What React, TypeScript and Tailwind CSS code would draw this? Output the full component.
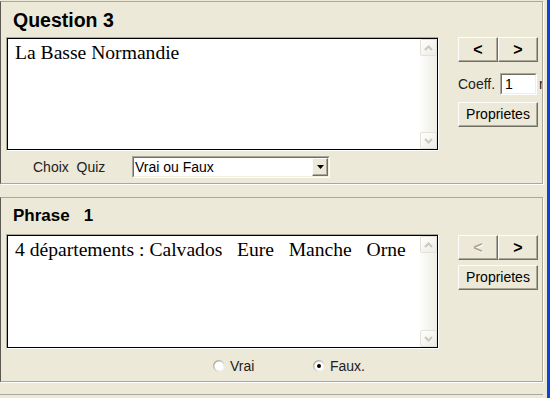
import React from "react";

const ui = "font-['Liberation_Sans',Arial,sans-serif]";

function XpButton({
  children,
  className = "",
  disabled = false,
}: {
  children: React.ReactNode;
  className?: string;
  disabled?: boolean;
}) {
  return (
    <div
      className={`flex items-center justify-center bg-[#ece9d8] border border-t-[#fdfdfb] border-l-[#fdfdfb] border-r-[#716f64] border-b-[#716f64] shadow-[inset_-1px_-1px_0_#aca899] ${
        disabled ? "text-[#aca899] [text-shadow:1px_1px_0_#fff]" : "text-black"
      } ${className}`}
    >
      {children}
    </div>
  );
}

function ScrollArrow({ up }: { up?: boolean }) {
  return (
    <div className="w-[17px] h-[17px] rounded-[2px] border border-[#e4e2d8] bg-gradient-to-br from-white to-[#ecebe3] flex items-center justify-center">
      <svg width="9" height="6" viewBox="0 0 9 6">
        <path
          d={up ? "M1 5 L4.5 1.5 L8 5" : "M1 1 L4.5 4.5 L8 1"}
          fill="none"
          stroke="#cbc8bb"
          strokeWidth="2"
        />
      </svg>
    </div>
  );
}

// sunken white text box with a disabled XP scrollbar
function TextBox({ text, height }: { text: string; height: string }) {
  return (
    <div className={`w-[433px] ${height} border border-t-[#aca899] border-l-[#aca899] border-b-white border-r-white`}>
      <div className="h-full border border-black bg-white flex">
        <div className="flex-1 pl-[7px] pt-[1px] font-['Liberation_Serif','Times_New_Roman',serif] text-[19.6px] leading-[25px] text-black whitespace-pre-wrap">
          {text}
        </div>
        <div className="w-[17px] flex flex-col justify-between bg-gradient-to-r from-[#fdfdfb] to-[#eeede5]">
          <ScrollArrow up />
          <ScrollArrow />
        </div>
      </div>
    </div>
  );
}

function Radio({ checked, label }: { checked?: boolean; label: string }) {
  return (
    <div className="flex items-center">
      <svg width="12" height="12" viewBox="0 0 12 12">
        <defs>
          <linearGradient id={`rg${label}`} x1="0" y1="0" x2="1" y2="1">
            <stop offset="0" stopColor="#9c9a8e" />
            <stop offset="0.55" stopColor="#d8d6cb" />
            <stop offset="1" stopColor="#ffffff" />
          </linearGradient>
        </defs>
        <circle cx="6" cy="6" r="5.3" fill="#fff" stroke={`url(#rg${label})`} strokeWidth="1.4" />
        {checked && <circle cx="6" cy="6" r="2" fill="#000" />}
      </svg>
      <span className="ml-[5px] text-[14px] leading-[14px] text-[#222]">{label}</span>
    </div>
  );
}

const panel =
  "w-[543px] border border-t-[#aca899] border-r-[#aca899] border-b-[#aca899] border-l-[#5a5850] shadow-[1px_1px_0_#fff] overflow-hidden";

export default function App() {
  return (
    <div className={`w-[550px] h-[398px] bg-[#ece9d8] flex overflow-hidden ${ui}`}>
      <div className="w-[547px] flex flex-col">
        {/* Question panel */}
        <div className={`${panel} h-[183px] mt-[1px]`}>
          <div className="ml-[12px] mt-[7px] h-[22px] leading-[22px] text-[19.5px] font-bold text-black">
            Question 3
          </div>
          <div className="flex mt-[6px]">
            <div className="ml-[5px]">
              <TextBox text="La Basse Normandie" height="h-[114px]" />
              <div className="flex items-center mt-[5px] h-[22px]">
                <span className="ml-[27px] w-[99px] text-[14px] whitespace-pre text-[#222]">Choix  Quiz</span>
                <div className="w-[198px] h-[22px] border border-t-[#aca899] border-l-[#aca899] border-b-white border-r-white">
                  <div className="h-full flex border border-t-[#716f64] border-l-[#716f64] border-b-[#f1efe2] border-r-[#f1efe2] bg-white">
                    <span className="flex-1 pl-[1px] text-[14px] leading-[18px] text-black">Vrai ou Faux</span>
                    <XpButton className="w-[16px] h-full">
                      <svg width="7" height="4" viewBox="0 0 7 4">
                        <path d="M0 0 H7 L3.5 4 Z" fill="#000" />
                      </svg>
                    </XpButton>
                  </div>
                </div>
              </div>
            </div>
            <div className="ml-[19px] w-[80px] flex flex-col">
              <div className="flex h-[25px]">
                <XpButton className="w-[40px] h-full text-[16px] font-bold">&lt;</XpButton>
                <XpButton className="w-[40px] h-full text-[16px] font-bold">&gt;</XpButton>
              </div>
              <div className="flex items-center mt-[11px] h-[22px] whitespace-nowrap">
                <span className="w-[42px] shrink-0 text-[14px] text-[#222]">Coeff.</span>
                <div className="w-[37px] h-[22px] shrink-0 border border-t-[#aca899] border-l-[#aca899] border-b-white border-r-white">
                  <div className="h-full border border-t-[#716f64] border-l-[#716f64] border-b-[#f1efe2] border-r-[#f1efe2] bg-white pl-[3px] text-[14px] leading-[18px] text-black">
                    1
                  </div>
                </div>
                <span className="ml-[2px] shrink-0 text-[14px] text-[#222]">r.</span>
              </div>
              <XpButton className="mt-[7px] h-[25px] w-[80px] text-[14px]">Proprietes</XpButton>
            </div>
          </div>
        </div>

        {/* Phrase panel */}
        <div className={`${panel} h-[185px] mt-[13px]`}>
          <div className="ml-[12px] mt-[8px] h-[20px] leading-[20px] text-[17px] font-bold text-black whitespace-pre">
            Phrase   1
          </div>
          <div className="flex mt-[8px]">
            <div className="ml-[5px]">
              <TextBox text="4 départements : Calvados   Eure   Manche   Orne" height="h-[115px]" />
            </div>
            <div className="ml-[19px] w-[80px] flex flex-col mt-[1px]">
              <div className="flex h-[25px]">
                <XpButton disabled className="w-[40px] h-full text-[16px] font-bold">&lt;</XpButton>
                <XpButton className="w-[40px] h-full text-[16px] font-bold">&gt;</XpButton>
              </div>
              <XpButton className="mt-[5px] h-[25px] w-[80px] text-[14px]">Proprietes</XpButton>
            </div>
          </div>
          <div className="flex mt-[10px] h-[14px]">
            <div className="ml-[212px] w-[100px]">
              <Radio label="Vrai" />
            </div>
            <Radio checked label="Faux." />
          </div>
        </div>

        <div className="mt-[12px] w-[543px] border-t border-[#aca899] shadow-[0_1px_0_#fff] h-[4px]" />
      </div>
      <div className="w-[3px] bg-[#0b44d6]" />
    </div>
  );
}
